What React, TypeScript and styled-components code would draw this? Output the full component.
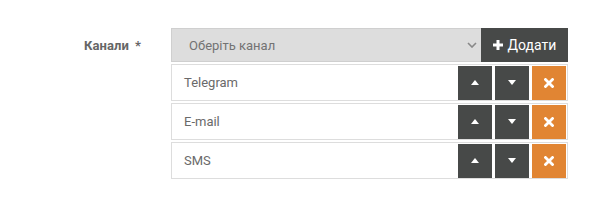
import React from "react";
import styled, { createGlobalStyle } from "styled-components";

const Global = createGlobalStyle`
  html, body { margin: 0; padding: 0; background: #fff; }
  body { font-family: Roboto, "Noto Sans", Arial, sans-serif; }
  * { box-sizing: border-box; }
`;

const Page = styled.div`
  padding-top: 28px;
  width: 614px;
  height: 207px;
`;

const FormRow = styled.div`
  display: flex;
  align-items: flex-start;
`;

const Label = styled.div`
  width: 141px;
  height: 34px;
  display: flex;
  align-items: center;
  justify-content: flex-end;
  margin-right: 30px;
  font-size: 13px;
  font-weight: 700;
  color: #666;
  letter-spacing: 0.1px;
`;

const Star = styled.span`
  margin-left: 6px;
  font-weight: 700;
`;

const Field = styled.div`
  width: 397px;
  display: flex;
  flex-direction: column;
  gap: 2px;
`;

const SelectGroup = styled.div`
  display: flex;
  height: 34px;
`;

const FakeSelect = styled.div`
  flex: 1;
  display: flex;
  align-items: center;
  justify-content: space-between;
  background: #dddddd;
  border: 1px solid #cfcfcf;
  border-right: none;
  padding: 0 4px 0 17px;
  font-size: 13px;
  color: #737373;
`;

const AddButton = styled.div`
  width: 87px;
  background: #474948;
  color: #fff;
  display: flex;
  align-items: center;
  justify-content: center;
  gap: 5px;
  font-size: 14px;
`;

const ItemRow = styled.div`
  display: flex;
  align-items: center;
  height: 37px;
  border: 1px solid #dddddd;
  background: #fff;
  padding-right: 1px;
`;

const ItemText = styled.div`
  flex: 1;
  padding-left: 12px;
  font-size: 13px;
  color: #6a6a6a;
`;

const Buttons = styled.div`
  display: flex;
  gap: 3px;
`;

const IconBtn = styled.div<{ $danger?: boolean }>`
  width: 34px;
  height: 34px;
  background: ${(p) => (p.$danger ? "#e18533" : "#474948")};
  display: flex;
  align-items: center;
  justify-content: center;
`;

const CaretUp = () => (
  <svg width="8" height="5" viewBox="0 0 8 5">
    <path d="M0 5 L4 0 L8 5 Z" fill="#fff" />
  </svg>
);
const CaretDown = () => (
  <svg width="8" height="5" viewBox="0 0 8 5">
    <path d="M0 0 L8 0 L4 5 Z" fill="#fff" />
  </svg>
);
const Times = () => (
  <svg width="10" height="10" viewBox="0 0 10 10">
    <path d="M1.5 1.5 L8.5 8.5 M8.5 1.5 L1.5 8.5" stroke="#fff" strokeWidth="2.8" strokeLinecap="square" />
  </svg>
);
const Plus = () => (
  <svg width="10" height="10" viewBox="0 0 10 10">
    <path d="M5 0 V10 M0 5 H10" stroke="#fff" strokeWidth="3" />
  </svg>
);
const Chevron = () => (
  <svg width="10" height="6" viewBox="0 0 10 6">
    <path d="M1 1 L5 5 L9 1" stroke="#888" strokeWidth="1.6" fill="none" />
  </svg>
);

const items = ["Telegram", "E-mail", "SMS"];

export default function App() {
  return (
    <>
      <Global />
      <Page>
        <FormRow>
          <Label>
            Канали<Star>*</Star>
          </Label>
          <Field>
            <SelectGroup>
              <FakeSelect>
                <span>Оберіть канал</span>
                <Chevron />
              </FakeSelect>
              <AddButton>
                <Plus />
                Додати
              </AddButton>
            </SelectGroup>
            {items.map((it) => (
              <ItemRow key={it}>
                <ItemText>{it}</ItemText>
                <Buttons>
                  <IconBtn>
                    <CaretUp />
                  </IconBtn>
                  <IconBtn>
                    <CaretDown />
                  </IconBtn>
                  <IconBtn $danger>
                    <Times />
                  </IconBtn>
                </Buttons>
              </ItemRow>
            ))}
          </Field>
        </FormRow>
      </Page>
    </>
  );
}
